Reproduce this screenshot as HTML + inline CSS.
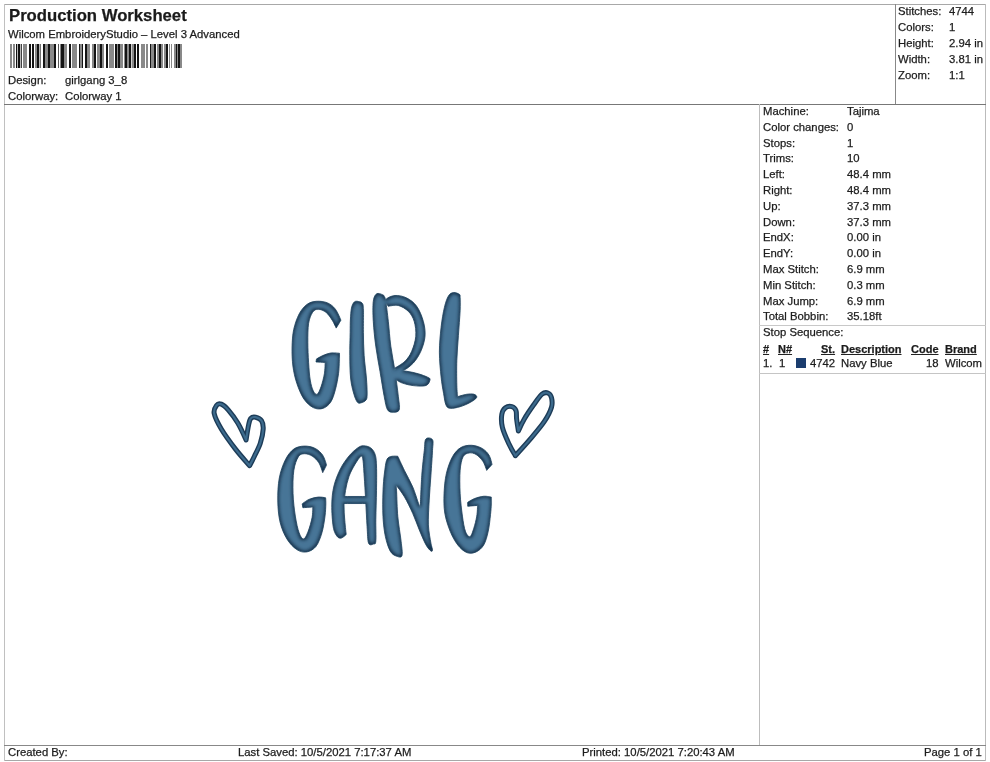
<!DOCTYPE html>
<html><head><meta charset="utf-8"><title>Production Worksheet</title>
<style>
html,body{margin:0;padding:0;background:#fff;}
body{width:990px;height:762px;position:relative;overflow:hidden;font-family:"Liberation Sans",sans-serif;color:#1a1a1a;}
.t{position:absolute;white-space:nowrap;-webkit-text-stroke:0.25px #222;will-change:transform;}
.l{position:absolute;}
svg{position:absolute;left:0;top:0;}
.sw{position:absolute;left:796px;top:358px;width:10px;height:10px;background:#1b3d6e;}
</style></head><body>
<div class="l" style="left:4px;top:4px;width:982px;height:1px;background:#a8a8a8"></div><div class="l" style="left:4px;top:760px;width:982px;height:1px;background:#a8a8a8"></div><div class="l" style="left:4px;top:4px;width:1px;height:757px;background:#c0c0c0"></div><div class="l" style="left:985px;top:4px;width:1px;height:757px;background:#bbbbbb"></div><div class="l" style="left:4px;top:104px;width:982px;height:1px;background:#777777"></div><div class="l" style="left:895px;top:4px;width:1px;height:100px;background:#888888"></div><div class="l" style="left:759px;top:104px;width:1px;height:641px;background:#bdbdbd"></div><div class="l" style="left:759px;top:325px;width:227px;height:1px;background:#c8c8c8"></div><div class="l" style="left:759px;top:373px;width:227px;height:1px;background:#c5c5c5"></div><div class="l" style="left:4px;top:745px;width:982px;height:1px;background:#888888"></div>
<svg width="990" height="762" viewBox="0 0 990 762">
<g shape-rendering="crispEdges">
<rect x="10" y="44" width="2.00" height="24" fill="rgb(137,137,137)"/>
<rect x="13" y="44" width="2.00" height="24" fill="rgb(137,137,137)"/>
<rect x="15.5" y="44" width="1.50" height="24" fill="rgb(20,20,20)"/>
<rect x="17" y="44" width="1.00" height="24" fill="rgb(184,184,184)"/>
<rect x="18" y="44" width="2.00" height="24" fill="rgb(20,20,20)"/>
<rect x="20" y="44" width="1.00" height="24" fill="rgb(184,184,184)"/>
<rect x="21" y="44" width="1.00" height="24" fill="rgb(67,67,67)"/>
<rect x="23" y="44" width="4.00" height="24" fill="rgb(137,137,137)"/>
<rect x="29" y="44" width="2.00" height="24" fill="rgb(20,20,20)"/>
<rect x="32" y="44" width="2.00" height="24" fill="rgb(20,20,20)"/>
<rect x="35" y="44" width="2.00" height="24" fill="rgb(137,137,137)"/>
<rect x="37" y="44" width="1.60" height="24" fill="rgb(20,20,20)"/>
<rect x="38.6" y="44" width="1.40" height="24" fill="rgb(184,184,184)"/>
<rect x="40" y="44" width="1.00" height="24" fill="rgb(114,114,114)"/>
<rect x="43" y="44" width="2.00" height="24" fill="rgb(20,20,20)"/>
<rect x="45" y="44" width="3.00" height="24" fill="rgb(137,137,137)"/>
<rect x="48" y="44" width="2.00" height="24" fill="rgb(20,20,20)"/>
<rect x="50" y="44" width="4.00" height="24" fill="rgb(137,137,137)"/>
<rect x="54" y="44" width="2.00" height="24" fill="rgb(20,20,20)"/>
<rect x="58" y="44" width="1.00" height="24" fill="rgb(90,90,90)"/>
<rect x="60" y="44" width="1.00" height="24" fill="rgb(137,137,137)"/>
<rect x="61" y="44" width="2.50" height="24" fill="rgb(20,20,20)"/>
<rect x="63.5" y="44" width="3.50" height="24" fill="rgb(137,137,137)"/>
<rect x="69" y="44" width="2.00" height="24" fill="rgb(20,20,20)"/>
<rect x="72" y="44" width="4.80" height="24" fill="rgb(137,137,137)"/>
<rect x="78.6" y="44" width="1.40" height="24" fill="rgb(20,20,20)"/>
<rect x="80" y="44" width="1.60" height="24" fill="rgb(137,137,137)"/>
<rect x="81.6" y="44" width="1.60" height="24" fill="rgb(20,20,20)"/>
<rect x="84.7" y="44" width="1.80" height="24" fill="rgb(20,20,20)"/>
<rect x="86.5" y="44" width="3.30" height="24" fill="rgb(137,137,137)"/>
<rect x="92" y="44" width="1.50" height="24" fill="rgb(137,137,137)"/>
<rect x="93.5" y="44" width="2.50" height="24" fill="rgb(20,20,20)"/>
<rect x="97" y="44" width="3.00" height="24" fill="rgb(137,137,137)"/>
<rect x="100" y="44" width="2.00" height="24" fill="rgb(20,20,20)"/>
<rect x="102" y="44" width="1.80" height="24" fill="rgb(137,137,137)"/>
<rect x="106" y="44" width="2.00" height="24" fill="rgb(20,20,20)"/>
<rect x="109" y="44" width="4.50" height="24" fill="rgb(137,137,137)"/>
<rect x="115.3" y="44" width="1.70" height="24" fill="rgb(20,20,20)"/>
<rect x="117" y="44" width="1.30" height="24" fill="rgb(137,137,137)"/>
<rect x="118.3" y="44" width="1.50" height="24" fill="rgb(20,20,20)"/>
<rect x="119.8" y="44" width="2.80" height="24" fill="rgb(137,137,137)"/>
<rect x="124" y="44" width="1.00" height="24" fill="rgb(137,137,137)"/>
<rect x="125" y="44" width="1.50" height="24" fill="rgb(20,20,20)"/>
<rect x="126.5" y="44" width="2.30" height="24" fill="rgb(137,137,137)"/>
<rect x="128.8" y="44" width="2.20" height="24" fill="rgb(20,20,20)"/>
<rect x="131" y="44" width="1.30" height="24" fill="rgb(208,208,208)"/>
<rect x="132.3" y="44" width="1.30" height="24" fill="rgb(137,137,137)"/>
<rect x="133.6" y="44" width="2.40" height="24" fill="rgb(20,20,20)"/>
<rect x="137" y="44" width="1.80" height="24" fill="rgb(20,20,20)"/>
<rect x="141" y="44" width="4.00" height="24" fill="rgb(137,137,137)"/>
<rect x="146.2" y="44" width="1.30" height="24" fill="rgb(137,137,137)"/>
<rect x="149.5" y="44" width="1.50" height="24" fill="rgb(20,20,20)"/>
<rect x="151" y="44" width="3.30" height="24" fill="rgb(137,137,137)"/>
<rect x="154.3" y="44" width="1.70" height="24" fill="rgb(20,20,20)"/>
<rect x="157.2" y="44" width="1.60" height="24" fill="rgb(137,137,137)"/>
<rect x="158.8" y="44" width="2.00" height="24" fill="rgb(20,20,20)"/>
<rect x="160.8" y="44" width="1.90" height="24" fill="rgb(137,137,137)"/>
<rect x="164" y="44" width="2.00" height="24" fill="rgb(137,137,137)"/>
<rect x="166" y="44" width="2.00" height="24" fill="rgb(20,20,20)"/>
<rect x="169.2" y="44" width="1.00" height="24" fill="rgb(137,137,137)"/>
<rect x="171" y="44" width="1.00" height="24" fill="rgb(137,137,137)"/>
<rect x="173.7" y="44" width="1.90" height="24" fill="rgb(137,137,137)"/>
<rect x="175.6" y="44" width="1.40" height="24" fill="rgb(20,20,20)"/>
<rect x="177" y="44" width="1.20" height="24" fill="rgb(137,137,137)"/>
<rect x="178.2" y="44" width="1.70" height="24" fill="rgb(20,20,20)"/>
<rect x="179.9" y="44" width="2.50" height="24" fill="rgb(137,137,137)"/>
</g>
<defs>
<filter id="satin" x="-5%" y="-5%" width="110%" height="110%">
<feMorphology in="SourceAlpha" operator="erode" radius="2" result="er"/>
<feGaussianBlur in="er" stdDeviation="1.8" result="bl"/>
<feFlood flood-color="#477597" result="fl"/>
<feComposite in="fl" in2="bl" operator="in" result="hl"/>
<feMerge><feMergeNode in="SourceGraphic"/><feMergeNode in="hl"/></feMerge>
</filter>
</defs>
<g filter="url(#satin)">
<g fill="#1b3853" stroke="#1b3853" stroke-width="0.8" stroke-linejoin="round">
<path d="M340.90,320.20 C340.90,320.20 337.63,312.08 335.40,309.20 C333.17,306.32 330.65,304.22 327.50,302.90 C324.35,301.58 319.92,301.05 316.50,301.30 C313.08,301.55 309.88,302.30 307.00,304.40 C304.12,306.50 301.42,309.70 299.20,313.90 C296.98,318.10 294.88,324.08 293.70,329.60 C292.52,335.12 292.23,340.95 292.10,347.00 C291.97,353.05 292.12,359.87 292.90,365.90 C293.68,371.93 294.97,377.68 296.80,383.20 C298.63,388.72 301.15,394.93 303.90,399.00 C306.65,403.07 310.15,406.03 313.30,407.60 C316.45,409.17 319.90,409.32 322.80,408.40 C325.70,407.48 328.60,405.25 330.70,402.10 C332.80,398.95 334.10,394.23 335.40,389.50 C336.70,384.77 337.85,378.43 338.50,373.70 C339.15,368.97 339.13,364.50 339.30,361.10 C339.47,357.70 339.50,353.30 339.50,353.30 C339.50,353.30 333.48,352.62 330.70,353.00 C327.92,353.38 325.17,354.60 322.80,355.60 C320.43,356.60 316.50,359.00 316.50,359.00 C316.50,359.00 316.00,362.00 316.00,362.00 C316.00,362.00 325.20,362.50 325.20,362.50 C325.20,362.50 325.07,369.73 324.40,373.70 C323.73,377.67 322.38,382.88 321.20,386.30 C320.02,389.72 318.62,393.42 317.30,394.20 C315.98,394.98 314.48,393.37 313.30,391.00 C312.12,388.63 310.98,384.72 310.20,380.00 C309.42,375.28 309.00,369.00 308.60,362.70 C308.20,356.40 307.80,348.77 307.80,342.20 C307.80,335.63 307.80,328.28 308.60,323.30 C309.40,318.32 311.02,314.65 312.60,312.30 C314.18,309.95 315.87,309.20 318.10,309.20 C320.33,309.20 323.65,310.47 326.00,312.30 C328.35,314.13 330.50,317.57 332.20,320.20 C333.90,322.83 336.20,328.10 336.20,328.10 C336.20,328.10 340.90,320.20 340.90,320.20Z"/>
<path d="M354.30,302.00 C353.13,303.08 352.15,305.00 351.50,308.00 C350.85,311.00 350.62,315.88 350.40,320.00 C350.18,324.12 350.30,326.82 350.20,332.70 C350.10,338.58 349.73,347.75 349.80,355.30 C349.87,362.85 349.97,371.72 350.60,378.00 C351.23,384.28 352.48,388.98 353.60,393.00 C354.72,397.02 356.05,400.47 357.30,402.10 C358.55,403.73 359.65,403.15 361.10,402.80 C362.55,402.45 365.00,401.47 366.00,400.00 C367.00,398.53 367.03,397.67 367.10,394.00 C367.17,390.33 366.90,384.45 366.40,378.00 C365.90,371.55 364.60,362.85 364.10,355.30 C363.60,347.75 363.52,340.23 363.40,332.70 C363.28,325.17 363.57,314.97 363.40,310.10 C363.23,305.23 363.22,304.93 362.40,303.50 C361.58,302.07 359.85,301.75 358.50,301.50 C357.15,301.25 355.47,300.92 354.30,302.00Z"/>
<path d="M376.70,293.80 C375.17,294.90 373.87,296.72 373.30,301.30 C372.73,305.88 372.88,313.80 373.30,321.30 C373.72,328.80 374.68,337.97 375.80,346.30 C376.92,354.63 378.60,362.97 380.00,371.30 C381.40,379.63 382.95,389.90 384.20,396.30 C385.45,402.70 385.98,407.05 387.50,409.70 C389.02,412.35 391.35,412.20 393.30,412.20 C395.25,412.20 398.37,412.35 399.20,409.70 C400.03,407.05 399.00,402.70 398.30,396.30 C397.60,389.90 396.25,379.63 395.00,371.30 C393.75,362.97 391.92,354.63 390.80,346.30 C389.68,337.97 389.13,328.80 388.30,321.30 C387.47,313.80 386.48,305.47 385.80,301.30 C385.12,297.13 384.75,297.40 384.20,296.30 C383.65,295.20 383.75,295.12 382.50,294.70 C381.25,294.28 378.23,292.70 376.70,293.80Z"/>
<path d="M385.80,299.70 C386.92,297.90 391.52,295.78 395.00,295.50 C398.48,295.22 403.08,296.20 406.70,298.00 C410.32,299.80 413.93,302.42 416.70,306.30 C419.47,310.18 421.92,316.30 423.30,321.30 C424.68,326.30 425.42,331.30 425.00,336.30 C424.58,341.30 422.75,346.85 420.80,351.30 C418.85,355.75 416.22,359.80 413.30,363.00 C410.38,366.20 406.22,369.12 403.30,370.50 C400.38,371.88 395.80,371.30 395.80,371.30 C395.80,371.30 395.00,368.00 395.00,368.00 C395.00,368.00 402.22,364.08 405.00,361.30 C407.78,358.52 409.90,355.47 411.70,351.30 C413.50,347.13 415.38,341.30 415.80,336.30 C416.22,331.30 415.45,325.47 414.20,321.30 C412.95,317.13 410.95,313.93 408.30,311.30 C405.65,308.67 401.63,306.33 398.30,305.50 C394.97,304.67 388.30,306.30 388.30,306.30 C388.30,306.30 384.68,301.50 385.80,299.70Z"/>
<path d="M395.00,370.50 C395.00,370.50 402.82,370.75 406.70,371.30 C410.58,371.85 414.83,372.82 418.30,373.80 C421.77,374.78 425.55,376.22 427.50,377.20 C429.45,378.18 430.25,378.32 430.00,379.70 C429.75,381.08 428.78,384.52 426.00,385.50 C423.22,386.48 417.35,386.05 413.30,385.60 C409.25,385.15 404.75,383.93 401.70,382.80 C398.65,381.67 395.00,378.80 395.00,378.80 C395.00,378.80 395.00,370.50 395.00,370.50Z"/>
<path d="M453.50,292.60 C451.70,292.87 450.02,293.42 448.50,295.90 C446.98,298.38 445.63,302.27 444.40,307.50 C443.17,312.73 441.93,319.87 441.10,327.30 C440.27,334.73 439.40,343.83 439.40,352.10 C439.40,360.37 440.40,370.02 441.10,376.90 C441.80,383.78 442.78,388.72 443.60,393.40 C444.42,398.08 444.90,402.52 446.00,405.00 C447.10,407.48 447.85,408.02 450.20,408.30 C452.55,408.58 456.80,407.67 460.10,406.70 C463.40,405.73 467.25,404.02 470.00,402.50 C472.75,400.98 475.92,398.97 476.60,397.60 C477.28,396.23 475.75,394.85 474.10,394.30 C472.45,393.75 469.45,393.90 466.70,394.30 C463.95,394.70 457.60,396.70 457.60,396.70 C457.60,396.70 456.93,391.25 456.80,385.20 C456.67,379.15 456.53,368.67 456.80,360.40 C457.07,352.13 457.85,343.87 458.40,335.60 C458.95,327.33 459.82,317.13 460.10,310.80 C460.38,304.47 460.23,300.35 460.10,297.60 C459.97,294.85 460.40,295.13 459.30,294.30 C458.20,293.47 455.30,292.33 453.50,292.60Z"/>
<path d="M326.50,465.10 C326.50,465.10 324.60,457.98 322.70,455.20 C320.80,452.42 318.15,449.92 315.10,448.40 C312.05,446.88 307.95,445.98 304.40,446.10 C300.85,446.22 296.97,446.82 293.80,449.10 C290.63,451.38 287.82,454.97 285.40,459.80 C282.98,464.63 280.57,471.25 279.30,478.10 C278.03,484.95 277.67,493.55 277.80,500.90 C277.93,508.25 278.58,515.87 280.10,522.20 C281.62,528.53 284.12,534.33 286.90,538.90 C289.68,543.47 293.50,547.43 296.80,549.60 C300.10,551.77 303.52,552.42 306.70,551.90 C309.88,551.38 313.37,549.68 315.90,546.50 C318.43,543.32 320.38,537.87 321.90,532.80 C323.42,527.73 324.35,520.92 325.00,516.10 C325.65,511.28 325.70,506.95 325.80,503.90 C325.90,500.85 325.60,497.80 325.60,497.80 C325.60,497.80 320.87,496.83 318.10,497.10 C315.33,497.37 311.65,498.27 309.00,499.40 C306.35,500.53 302.20,503.90 302.20,503.90 C302.20,503.90 302.90,507.70 302.90,507.70 C302.90,507.70 312.80,507.00 312.80,507.00 C312.80,507.00 312.87,513.55 312.10,517.60 C311.33,521.65 309.60,527.75 308.20,531.30 C306.80,534.85 305.22,538.65 303.70,538.90 C302.18,539.15 300.50,536.60 299.10,532.80 C297.70,529.00 296.32,522.68 295.30,516.10 C294.28,509.52 293.25,500.92 293.00,493.30 C292.75,485.68 292.90,476.50 293.80,470.40 C294.70,464.30 296.63,459.48 298.40,456.70 C300.17,453.92 302.12,453.82 304.40,453.70 C306.68,453.58 309.68,454.48 312.10,456.00 C314.52,457.52 317.13,460.02 318.90,462.80 C320.67,465.58 322.70,472.70 322.70,472.70 C322.70,472.70 326.50,465.10 326.50,465.10Z"/>
<path d="M336.80,536.00 C338.13,537.92 339.63,538.35 341.20,538.10 C342.77,537.85 346.20,534.50 346.20,534.50 C346.20,534.50 345.17,525.73 344.80,520.80 C344.43,515.87 343.88,509.95 344.00,504.90 C344.12,499.85 344.65,495.30 345.50,490.50 C346.35,485.70 347.53,480.43 349.10,476.10 C350.67,471.77 352.98,467.75 354.90,464.50 C356.82,461.25 359.28,457.55 360.60,456.60 C361.92,455.65 362.20,455.55 362.80,458.80 C363.40,462.05 363.72,469.13 364.20,476.10 C364.68,483.07 365.22,492.18 365.70,500.60 C366.18,509.02 366.62,519.50 367.10,526.60 C367.58,533.70 367.52,540.32 368.60,543.20 C369.68,546.08 372.40,544.27 373.60,543.90 C374.80,543.53 375.43,545.08 375.80,541.00 C376.17,536.92 375.68,527.82 375.80,519.40 C375.92,510.98 376.38,499.40 376.50,490.50 C376.62,481.60 376.73,472.02 376.50,466.00 C376.27,459.98 376.07,457.42 375.10,454.40 C374.13,451.38 372.63,449.33 370.70,447.90 C368.77,446.47 365.67,445.80 363.50,445.80 C361.33,445.80 360.10,446.22 357.70,447.90 C355.30,449.58 351.98,452.40 349.10,455.90 C346.22,459.40 342.93,463.85 340.40,468.90 C337.87,473.95 335.33,480.20 333.90,486.20 C332.47,492.20 331.92,498.17 331.80,504.90 C331.68,511.63 332.37,521.42 333.20,526.60 C334.03,531.78 335.47,534.08 336.80,536.00Z"/>
<path d="M344.00,496.50 C344.00,496.50 366.00,496.50 366.00,496.50 C366.00,496.50 366.00,503.50 366.00,503.50 C366.00,503.50 344.00,503.50 344.00,503.50 C344.00,503.50 344.00,496.50 344.00,496.50Z"/>
<path d="M387.90,458.00 C390.10,455.38 397.80,456.30 397.80,456.30 C397.80,456.30 401.92,465.30 404.40,470.40 C406.88,475.50 410.35,481.40 412.70,486.90 C415.05,492.40 417.23,500.05 418.50,503.40 C419.77,506.75 420.30,507.00 420.30,507.00 C420.30,507.00 421.13,484.72 421.80,475.30 C422.47,465.88 423.62,456.55 424.30,450.50 C424.98,444.45 424.53,440.78 425.90,439.00 C427.27,437.22 431.40,437.88 432.50,439.80 C433.60,441.72 432.77,444.58 432.50,450.50 C432.23,456.42 431.45,467.03 430.90,475.30 C430.35,483.57 429.62,491.83 429.20,500.10 C428.78,508.37 428.12,517.73 428.40,524.90 C428.68,532.07 430.22,538.97 430.90,543.10 C431.58,547.23 432.50,548.38 432.50,549.70 C432.50,551.02 432.00,551.83 430.90,551.00 C429.80,550.17 427.83,548.22 425.90,544.70 C423.97,541.18 421.50,535.13 419.30,529.90 C417.10,524.67 415.18,518.82 412.70,513.30 C410.22,507.78 407.15,501.48 404.40,496.80 C401.65,492.12 396.20,485.20 396.20,485.20 C396.20,485.20 396.33,486.67 396.60,491.90 C396.87,497.13 397.05,508.35 397.80,516.60 C398.55,524.85 400.40,534.92 401.10,541.40 C401.80,547.88 402.68,553.02 402.00,555.50 C401.32,557.98 398.93,556.98 397.00,556.30 C395.07,555.62 392.33,554.70 390.40,551.40 C388.47,548.10 386.63,542.30 385.40,536.50 C384.17,530.70 383.40,524.03 383.00,516.60 C382.60,509.17 382.73,499.33 383.00,491.90 C383.27,484.47 383.78,477.65 384.60,472.00 C385.42,466.35 385.70,460.62 387.90,458.00Z"/>
<path d="M492.00,464.40 C492.00,464.40 490.65,457.87 489.00,455.20 C487.35,452.53 485.02,450.05 482.10,448.40 C479.18,446.75 475.05,445.43 471.50,445.30 C467.95,445.17 463.97,445.70 460.80,447.60 C457.63,449.50 454.90,452.38 452.50,456.70 C450.10,461.02 447.80,467.40 446.40,473.50 C445.00,479.60 444.37,486.70 444.10,493.30 C443.83,499.90 443.78,506.77 444.80,513.10 C445.82,519.43 448.03,525.98 450.20,531.30 C452.37,536.62 455.02,541.45 457.80,545.00 C460.58,548.55 463.85,551.45 466.90,552.60 C469.95,553.75 473.30,553.17 476.10,551.90 C478.90,550.63 481.68,548.43 483.70,545.00 C485.72,541.57 487.07,536.37 488.20,531.30 C489.33,526.23 489.98,519.17 490.50,514.60 C491.02,510.03 491.17,506.82 491.30,503.90 C491.43,500.98 491.30,497.10 491.30,497.10 C491.30,497.10 486.50,496.05 483.70,496.30 C480.90,496.55 477.17,497.58 474.50,498.60 C471.83,499.62 467.70,502.40 467.70,502.40 C467.70,502.40 467.70,506.20 467.70,506.20 C467.70,506.20 477.60,505.40 477.60,505.40 C477.60,505.40 477.43,512.28 476.80,516.10 C476.17,519.92 474.93,524.87 473.80,528.30 C472.67,531.73 471.40,536.20 470.00,536.70 C468.60,537.20 466.67,534.73 465.40,531.30 C464.13,527.87 463.28,522.43 462.40,516.10 C461.52,509.77 460.48,500.92 460.10,493.30 C459.72,485.68 459.60,476.50 460.10,470.40 C460.60,464.30 461.58,459.62 463.10,456.70 C464.62,453.78 467.03,453.27 469.20,452.90 C471.37,452.53 473.82,453.10 476.10,454.50 C478.38,455.90 481.13,458.65 482.90,461.30 C484.67,463.95 486.70,470.40 486.70,470.40 C486.70,470.40 492.00,464.40 492.00,464.40Z"/>
</g>
</g>
<g fill="none" stroke="#1d3c58" stroke-width="5" stroke-linejoin="round" stroke-linecap="round">
<path d="M249.60,465.70 C247.25,462.93 240.22,455.22 235.50,449.10 C230.78,442.98 224.85,434.92 221.30,429.00 C217.75,423.08 215.00,417.53 214.20,413.60 C213.40,409.67 215.32,406.97 216.50,405.40 C217.68,403.83 219.32,403.42 221.30,404.20 C223.28,404.98 225.65,406.95 228.40,410.10 C231.15,413.25 234.85,418.12 237.80,423.10 C240.75,428.08 246.10,440.00 246.10,440.00 C246.10,440.00 247.72,429.10 248.50,425.50 C249.28,421.90 249.62,419.78 250.80,418.40 C251.98,417.02 253.82,416.82 255.60,417.20 C257.38,417.58 260.23,418.73 261.50,420.70 C262.77,422.67 263.40,425.25 263.20,429.00 C263.00,432.75 261.77,438.67 260.30,443.20 C258.83,447.73 256.18,452.45 254.40,456.20 C252.62,459.95 250.40,464.12 249.60,465.70"/>
<path d="M515.40,455.70 C514.32,453.72 511.07,448.53 508.90,443.80 C506.73,439.07 503.58,432.22 502.40,427.30 C501.22,422.38 501.30,417.55 501.80,414.30 C502.30,411.05 503.72,409.08 505.40,407.80 C507.08,406.52 510.13,406.12 511.90,406.60 C513.67,407.08 515.22,408.63 516.00,410.70 C516.78,412.77 516.20,415.62 516.60,419.00 C517.00,422.38 518.40,431.00 518.40,431.00 C518.40,431.00 521.75,423.37 524.30,419.00 C526.85,414.63 530.75,408.93 533.70,404.80 C536.65,400.67 539.63,396.17 542.00,394.20 C544.37,392.23 546.32,392.42 547.90,393.00 C549.48,393.58 550.90,395.33 551.50,397.70 C552.10,400.07 552.68,403.25 551.50,407.20 C550.32,411.15 547.95,416.08 544.40,421.40 C540.85,426.72 535.03,433.38 530.20,439.10 C525.37,444.82 517.87,452.93 515.40,455.70"/>
</g>
<g fill="none" stroke="#3c6a8c" stroke-width="2.2" stroke-linejoin="round" stroke-linecap="round">
<path d="M249.60,465.70 C247.25,462.93 240.22,455.22 235.50,449.10 C230.78,442.98 224.85,434.92 221.30,429.00 C217.75,423.08 215.00,417.53 214.20,413.60 C213.40,409.67 215.32,406.97 216.50,405.40 C217.68,403.83 219.32,403.42 221.30,404.20 C223.28,404.98 225.65,406.95 228.40,410.10 C231.15,413.25 234.85,418.12 237.80,423.10 C240.75,428.08 246.10,440.00 246.10,440.00 C246.10,440.00 247.72,429.10 248.50,425.50 C249.28,421.90 249.62,419.78 250.80,418.40 C251.98,417.02 253.82,416.82 255.60,417.20 C257.38,417.58 260.23,418.73 261.50,420.70 C262.77,422.67 263.40,425.25 263.20,429.00 C263.00,432.75 261.77,438.67 260.30,443.20 C258.83,447.73 256.18,452.45 254.40,456.20 C252.62,459.95 250.40,464.12 249.60,465.70"/>
<path d="M515.40,455.70 C514.32,453.72 511.07,448.53 508.90,443.80 C506.73,439.07 503.58,432.22 502.40,427.30 C501.22,422.38 501.30,417.55 501.80,414.30 C502.30,411.05 503.72,409.08 505.40,407.80 C507.08,406.52 510.13,406.12 511.90,406.60 C513.67,407.08 515.22,408.63 516.00,410.70 C516.78,412.77 516.20,415.62 516.60,419.00 C517.00,422.38 518.40,431.00 518.40,431.00 C518.40,431.00 521.75,423.37 524.30,419.00 C526.85,414.63 530.75,408.93 533.70,404.80 C536.65,400.67 539.63,396.17 542.00,394.20 C544.37,392.23 546.32,392.42 547.90,393.00 C549.48,393.58 550.90,395.33 551.50,397.70 C552.10,400.07 552.68,403.25 551.50,407.20 C550.32,411.15 547.95,416.08 544.40,421.40 C540.85,426.72 535.03,433.38 530.20,439.10 C525.37,444.82 517.87,452.93 515.40,455.70"/>
</g>
</svg>
<div class="sw"></div>
<div class="t" style="top:6.20px;font-size:16.7px;line-height:20px;left:9.00px;font-weight:bold;">Production Worksheet</div>
<div class="t" style="top:27.40px;font-size:11.3px;line-height:14px;left:7.70px;">Wilcom EmbroideryStudio – Level 3 Advanced</div>
<div class="t" style="top:72.60px;font-size:11.3px;line-height:14px;left:7.80px;">Design:</div>
<div class="t" style="top:72.60px;font-size:11.3px;line-height:14px;left:65.00px;">girlgang 3_8</div>
<div class="t" style="top:88.60px;font-size:11.3px;line-height:14px;left:7.80px;">Colorway:</div>
<div class="t" style="top:88.60px;font-size:11.3px;line-height:14px;left:65.00px;">Colorway 1</div>
<div class="t" style="top:4.20px;font-size:11.3px;line-height:14px;left:897.80px;">Stitches:</div>
<div class="t" style="top:4.20px;font-size:11.3px;line-height:14px;left:948.50px;">4744</div>
<div class="t" style="top:20.10px;font-size:11.3px;line-height:14px;left:897.80px;">Colors:</div>
<div class="t" style="top:20.10px;font-size:11.3px;line-height:14px;left:948.50px;">1</div>
<div class="t" style="top:36.00px;font-size:11.3px;line-height:14px;left:897.80px;">Height:</div>
<div class="t" style="top:36.00px;font-size:11.3px;line-height:14px;left:948.50px;">2.94 in</div>
<div class="t" style="top:51.90px;font-size:11.3px;line-height:14px;left:897.80px;">Width:</div>
<div class="t" style="top:51.90px;font-size:11.3px;line-height:14px;left:948.50px;">3.81 in</div>
<div class="t" style="top:67.80px;font-size:11.3px;line-height:14px;left:897.80px;">Zoom:</div>
<div class="t" style="top:67.80px;font-size:11.3px;line-height:14px;left:948.50px;">1:1</div>
<div class="t" style="top:104.00px;font-size:11.3px;line-height:14px;left:763.00px;">Machine:</div>
<div class="t" style="top:104.00px;font-size:11.3px;line-height:14px;left:846.60px;">Tajima</div>
<div class="t" style="top:119.80px;font-size:11.3px;line-height:14px;left:763.00px;">Color changes:</div>
<div class="t" style="top:119.80px;font-size:11.3px;line-height:14px;left:846.60px;">0</div>
<div class="t" style="top:135.60px;font-size:11.3px;line-height:14px;left:763.00px;">Stops:</div>
<div class="t" style="top:135.60px;font-size:11.3px;line-height:14px;left:846.60px;">1</div>
<div class="t" style="top:151.40px;font-size:11.3px;line-height:14px;left:763.00px;">Trims:</div>
<div class="t" style="top:151.40px;font-size:11.3px;line-height:14px;left:846.60px;">10</div>
<div class="t" style="top:167.20px;font-size:11.3px;line-height:14px;left:763.00px;">Left:</div>
<div class="t" style="top:167.20px;font-size:11.3px;line-height:14px;left:846.60px;">48.4 mm</div>
<div class="t" style="top:183.00px;font-size:11.3px;line-height:14px;left:763.00px;">Right:</div>
<div class="t" style="top:183.00px;font-size:11.3px;line-height:14px;left:846.60px;">48.4 mm</div>
<div class="t" style="top:198.80px;font-size:11.3px;line-height:14px;left:763.00px;">Up:</div>
<div class="t" style="top:198.80px;font-size:11.3px;line-height:14px;left:846.60px;">37.3 mm</div>
<div class="t" style="top:214.60px;font-size:11.3px;line-height:14px;left:763.00px;">Down:</div>
<div class="t" style="top:214.60px;font-size:11.3px;line-height:14px;left:846.60px;">37.3 mm</div>
<div class="t" style="top:230.40px;font-size:11.3px;line-height:14px;left:763.00px;">EndX:</div>
<div class="t" style="top:230.40px;font-size:11.3px;line-height:14px;left:846.60px;">0.00 in</div>
<div class="t" style="top:246.20px;font-size:11.3px;line-height:14px;left:763.00px;">EndY:</div>
<div class="t" style="top:246.20px;font-size:11.3px;line-height:14px;left:846.60px;">0.00 in</div>
<div class="t" style="top:262.00px;font-size:11.3px;line-height:14px;left:763.00px;">Max Stitch:</div>
<div class="t" style="top:262.00px;font-size:11.3px;line-height:14px;left:846.60px;">6.9 mm</div>
<div class="t" style="top:277.80px;font-size:11.3px;line-height:14px;left:763.00px;">Min Stitch:</div>
<div class="t" style="top:277.80px;font-size:11.3px;line-height:14px;left:846.60px;">0.3 mm</div>
<div class="t" style="top:293.60px;font-size:11.3px;line-height:14px;left:763.00px;">Max Jump:</div>
<div class="t" style="top:293.60px;font-size:11.3px;line-height:14px;left:846.60px;">6.9 mm</div>
<div class="t" style="top:309.40px;font-size:11.3px;line-height:14px;left:763.00px;">Total Bobbin:</div>
<div class="t" style="top:309.40px;font-size:11.3px;line-height:14px;left:846.60px;">35.18ft</div>
<div class="t" style="top:324.70px;font-size:11.3px;line-height:14px;left:762.90px;">Stop Sequence:</div>
<div class="t" style="top:343.00px;font-size:11px;line-height:13px;left:762.90px;font-weight:bold;text-decoration:underline;">#</div>
<div class="t" style="top:343.00px;font-size:11px;line-height:13px;left:778.30px;font-weight:bold;text-decoration:underline;">N#</div>
<div class="t" style="top:343.00px;font-size:11px;line-height:13px;right:154.60px;font-weight:bold;text-decoration:underline;">St.</div>
<div class="t" style="top:343.00px;font-size:11px;line-height:13px;left:841.30px;font-weight:bold;text-decoration:underline;">Description</div>
<div class="t" style="top:343.00px;font-size:11px;line-height:13px;left:911.20px;font-weight:bold;text-decoration:underline;">Code</div>
<div class="t" style="top:343.00px;font-size:11px;line-height:13px;left:945.30px;font-weight:bold;text-decoration:underline;">Brand</div>
<div class="t" style="top:356.20px;font-size:11.3px;line-height:14px;left:763.00px;">1.</div>
<div class="t" style="top:356.20px;font-size:11.3px;line-height:14px;left:778.60px;">1</div>
<div class="t" style="top:356.20px;font-size:11.3px;line-height:14px;right:154.60px;">4742</div>
<div class="t" style="top:356.20px;font-size:11.3px;line-height:14px;left:841.30px;">Navy Blue</div>
<div class="t" style="top:356.20px;font-size:11.3px;line-height:14px;right:51.40px;">18</div>
<div class="t" style="top:356.20px;font-size:11.3px;line-height:14px;left:945.30px;">Wilcom</div>
<div class="t" style="top:745.00px;font-size:11.3px;line-height:14px;left:7.90px;">Created By:</div>
<div class="t" style="top:745.00px;font-size:11.3px;line-height:14px;left:237.80px;">Last Saved: 10/5/2021 7:17:37 AM</div>
<div class="t" style="top:745.00px;font-size:11.3px;line-height:14px;left:582.20px;">Printed: 10/5/2021 7:20:43 AM</div>
<div class="t" style="top:745.00px;font-size:11.3px;line-height:14px;right:8.00px;">Page 1 of 1</div>
</body></html>
